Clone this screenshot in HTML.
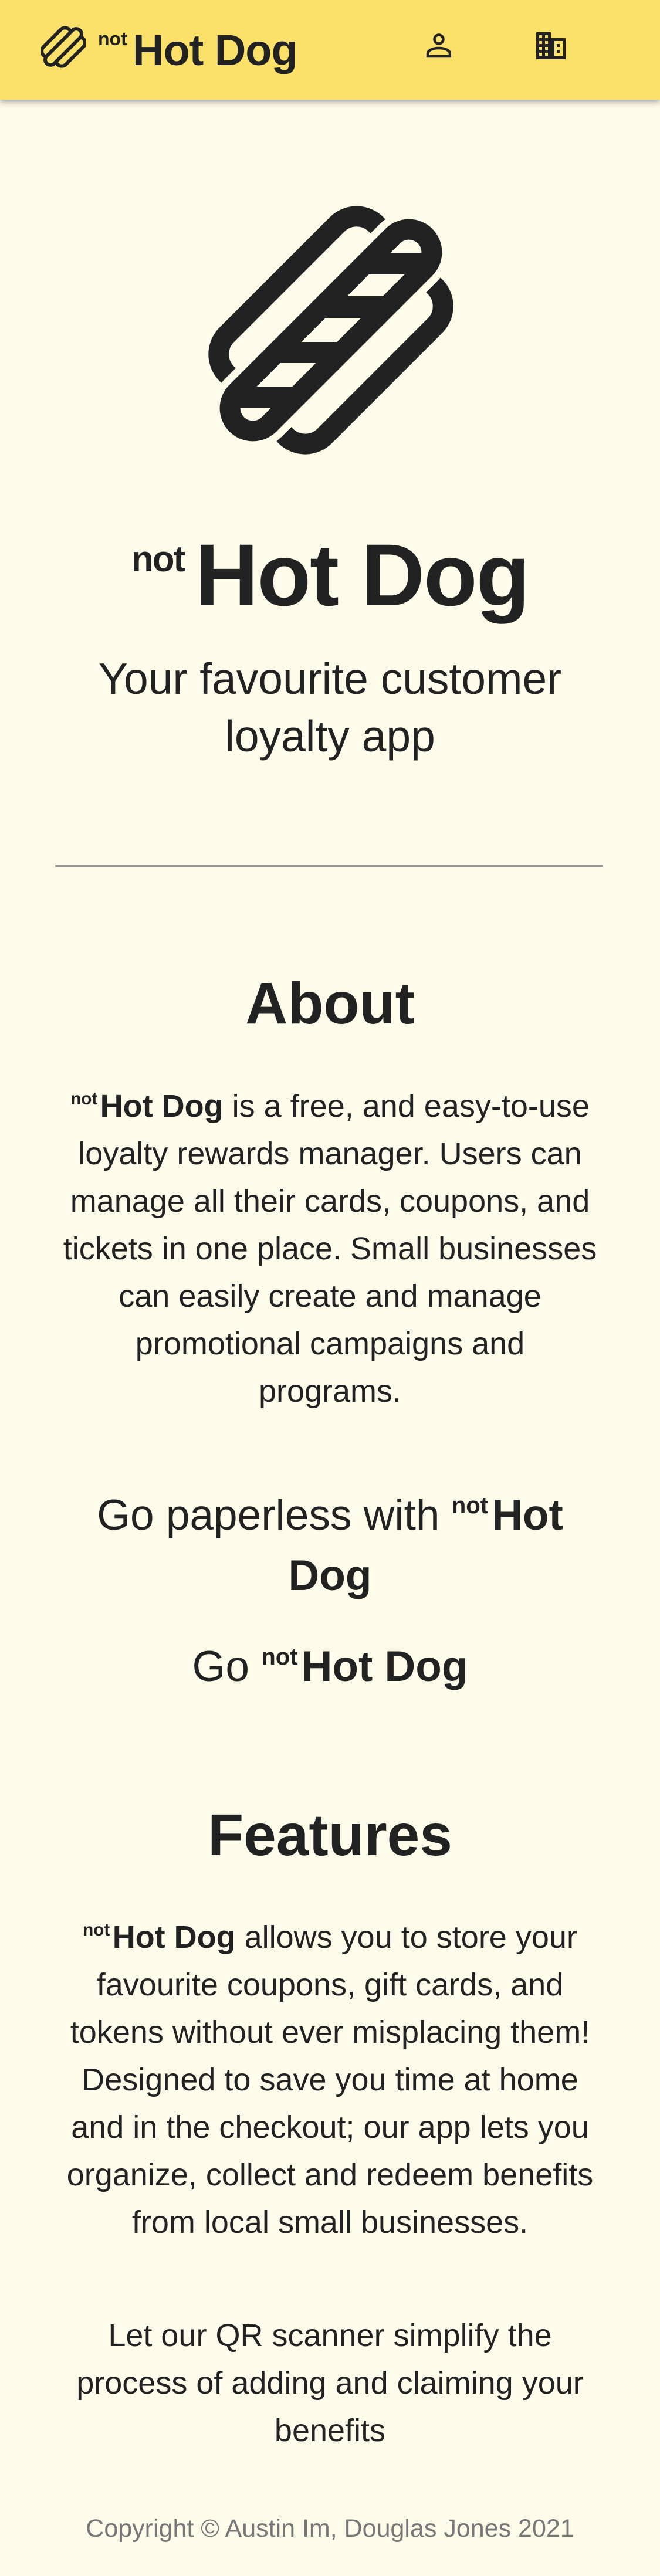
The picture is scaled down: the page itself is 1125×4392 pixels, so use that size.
<!DOCTYPE html>
<html><head><meta charset="utf-8">
<style>
html,body{margin:0;padding:0}
body{width:1125px;height:4392px;background:#fefbea;position:relative;overflow:hidden;font-family:"Liberation Sans",sans-serif;color:#222}
.hdr{position:absolute;left:0;top:0;width:1125px;height:170px;background:#fbe06a;box-shadow:0 4px 10px rgba(0,0,0,.35)}
.abs{position:absolute;white-space:nowrap}
.c{left:0;width:1125px;text-align:center}
.n{font-weight:bold;font-size:0.55em;vertical-align:0.7em;margin-right:0.15em}
b{font-weight:bold}
</style></head><body>
<div class="hdr">
<svg class="abs" style="left:70px;top:42px" width="76" height="76" viewBox="0 0 76 76">
<g transform="rotate(-45 38 38)" fill="#fbe06a" stroke="#222" stroke-width="6">
<rect x="4" y="14" width="62" height="20" rx="10"/>
<rect x="10" y="42" width="62" height="20" rx="10"/>
<rect x="-2" y="29" width="80" height="18" rx="9"/>
</g></svg>
<div class="abs" style="left:167px;top:46px;font-size:32px;font-weight:bold;line-height:40px">not</div>
<div class="abs" style="left:226px;top:47px;font-size:74px;font-weight:bold;line-height:78px;letter-spacing:-1px">Hot Dog</div>
<svg class="abs" style="left:725px;top:56px" width="44" height="44" viewBox="0 0 44 44">
<circle cx="23" cy="11" r="7.5" fill="none" stroke="#222" stroke-width="4.5"/>
<path d="M4 40 V36 C4 29 14 26 23 26 C32 26 42 29 42 36 V40 Z" fill="none" stroke="#222" stroke-width="4.5"/>
</svg>
<svg class="abs" style="left:914px;top:55px" width="52" height="46" viewBox="0 0 52 46">
<path d="M0 0H25V10H50V46H0Z" fill="#222"/>
<g fill="#fbe06a">
<rect x="5" y="5" width="5" height="5"/><rect x="15" y="5" width="5" height="5"/>
<rect x="5" y="15" width="5" height="5"/><rect x="15" y="15" width="5" height="5"/>
<rect x="5" y="25" width="5" height="5"/><rect x="15" y="25" width="5" height="5"/>
<rect x="5" y="35" width="5" height="5"/><rect x="15" y="35" width="5" height="5"/>
<rect x="29" y="15" width="17" height="26"/>
</g>
<g fill="#222"><rect x="35" y="20" width="5" height="5"/><rect x="35" y="30" width="5" height="5"/><rect x="29" y="15" width="2" height="26"/></g>
</svg>
</div>

<svg class="abs" style="left:0;top:0" width="1125" height="900" viewBox="0 0 1125 900">
<defs><clipPath id="sc"><rect x="-227" y="-39" width="454" height="78" rx="39" transform="translate(564 563) rotate(-45)"/></clipPath></defs>
<g transform="translate(564 563) rotate(-45)" stroke="#222" stroke-width="35" fill="#fefbea">
<rect x="-178" y="-120" width="360" height="95" rx="47"/>
<rect x="-182" y="25" width="360" height="95" rx="47"/>
<rect x="-227" y="-39" width="454" height="78" rx="39" stroke="#fefbea" stroke-width="60"/>
</g>
<g clip-path="url(#sc)" fill="#222">
<rect x="300" y="431" width="500" height="37"/>
<rect x="300" y="505" width="500" height="37"/>
<rect x="300" y="583" width="500" height="36"/>
<rect x="300" y="659" width="500" height="37"/>
</g>
<g transform="translate(564 563) rotate(-45)" stroke="#222" stroke-width="35" fill="none">
<rect x="-227" y="-39" width="454" height="78" rx="39"/>
</g>
</svg>

<div class="abs c" style="top:879px;font-size:150px;line-height:150px;font-weight:bold;letter-spacing:-2px"><span style="font-size:62px;vertical-align:58px;margin-right:18px">not</span>Hot Dog</div>
<div class="abs c" style="top:1108px;font-size:75px;line-height:98px">Your favourite customer<br>loyalty app</div>
<div class="abs" style="left:94px;top:1475px;width:934px;height:3px;background:#9a9a9a"></div>

<div class="abs c" style="top:1661px;font-size:100px;line-height:100px;font-weight:bold">About</div>
<div class="abs c" style="top:1833px;font-size:54px;line-height:81px"><span class="n">not</span><b>Hot Dog</b> is a free, and easy-to-use<br>loyalty rewards manager. Users can<br>manage all their cards, coupons, and<br>tickets in one place. Small businesses<br>can easily create and manage<br>promotional campaigns and<br>programs.</div>
<div class="abs c" style="top:2515px;font-size:73px;line-height:103px">Go paperless with <span class="n">not</span><b>Hot</b><br><b>Dog</b></div>
<div class="abs c" style="top:2773px;font-size:73px;line-height:103px">Go <span class="n">not</span><b>Hot Dog</b></div>

<div class="abs c" style="top:3079px;font-size:100px;line-height:100px;font-weight:bold">Features</div>
<div class="abs c" style="top:3250px;font-size:54px;line-height:81px"><span class="n">not</span><b>Hot Dog</b> allows you to store your<br>favourite coupons, gift cards, and<br>tokens without ever misplacing them!<br>Designed to save you time at home<br>and in the checkout; our app lets you<br>organize, collect and redeem benefits<br>from local small businesses.</div>
<div class="abs c" style="top:3942px;font-size:54px;line-height:81px">Let our QR scanner simplify the<br>process of adding and claiming your<br>benefits</div>
<div class="abs c" style="top:4286px;font-size:43px;line-height:50px;color:#777">Copyright © Austin Im, Douglas Jones 2021</div>
</body></html>
